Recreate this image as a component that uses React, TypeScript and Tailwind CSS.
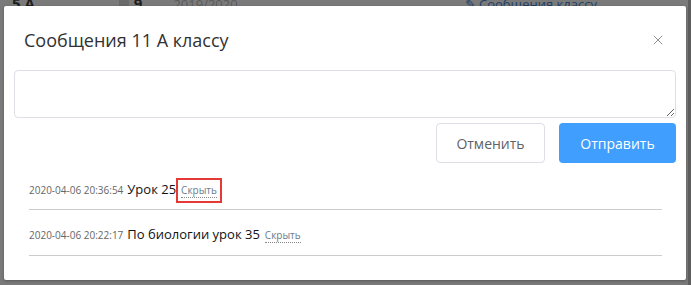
import { X } from 'lucide-react'

const messages = [
  { date: '2020-04-06 20:36:54', text: 'Урок 25', marked: true },
  { date: '2020-04-06 20:22:17', text: 'По биологии урок 35', marked: false },
]

export default function App() {
  return (
    <div
      className="relative w-[691px] h-[285px] overflow-hidden bg-[#7a7a7a]"
      style={{ fontFamily: '"Open Sans", "Noto Sans", sans-serif' }}
    >
      {/* dimmed page behind the dialog */}
      <div className="flex items-end h-[6px] text-[#1e1e1e] text-[15px] font-bold leading-none">
        <span className="ml-[12px] -mb-[5px]">5 А</span>
        <span className="ml-[84px] -mb-[3px] w-[10px] h-[10px] bg-[#6a6a6a] rounded-[2px]" />
        <span className="ml-[5px] -mb-[5px]">9</span>
        <span className="ml-[31px] -mb-[5px] text-[13px] font-normal text-[#5a5a5a]">2019/2020</span>
        <span className="ml-[227px] -mb-[5px] text-[13px] font-normal text-[#1f3f66]">✎ Сообщения классу</span>
      </div>
      <div className="absolute right-0 top-0 w-[3px] h-full bg-[#5e5e5e]" />

      <div className="absolute left-[4px] top-[6px] w-[682px] h-[274px] bg-white rounded-[2px] shadow-[0_1px_3px_rgba(0,0,0,0.3)]">
        <div className="flex items-center justify-between pl-[20px] pr-[20px] pt-[22px]">
          <h2 className="text-[18px] leading-[24px] text-[#303133]">Сообщения 11 А классу</h2>
          <X className="w-[16px] h-[16px] text-[#909399]" strokeWidth={1.5} />
        </div>

        <div className="px-[10px] pt-[18px]">
          <textarea className="block w-full h-[48px] rounded-[4px] border border-[#dcdfe6] outline-none resize-y" />
          <div className="flex justify-end gap-[14px] mt-[5px]">
            <button className="w-[109px] h-[40px] rounded-[4px] border border-[#dcdfe6] bg-white text-[14px] text-[#606266]">
              Отменить
            </button>
            <button className="w-[117px] h-[40px] rounded-[4px] bg-[#409eff] text-[14px] text-white">
              Отправить
            </button>
          </div>
        </div>

        <div className="pl-[25px] pr-[24px] pt-[1px]">
          {messages.map((m) => (
            <div key={m.date} className="flex items-baseline h-[46px] pt-[15px] border-b border-[#cccccc]">
              <span className="text-[10px] text-[#666666]">{m.date}</span>
              <span className="ml-[4px] text-[13px] text-[#111111]">{m.text}</span>
              <span
                className={
                  m.marked
                    ? 'ml-[1px] px-[4px] text-[10px] text-[#6b7b8c] outline-2 outline-[#e53935] -outline-offset-[1px] py-[4px]'
                    : 'ml-[5px] text-[10px] text-[#6b7b8c]'
                }
              >
                <span className="border-b border-dotted border-[#8a8a8a]">Скрыть</span>
              </span>
            </div>
          ))}
        </div>
      </div>
    </div>
  )
}
